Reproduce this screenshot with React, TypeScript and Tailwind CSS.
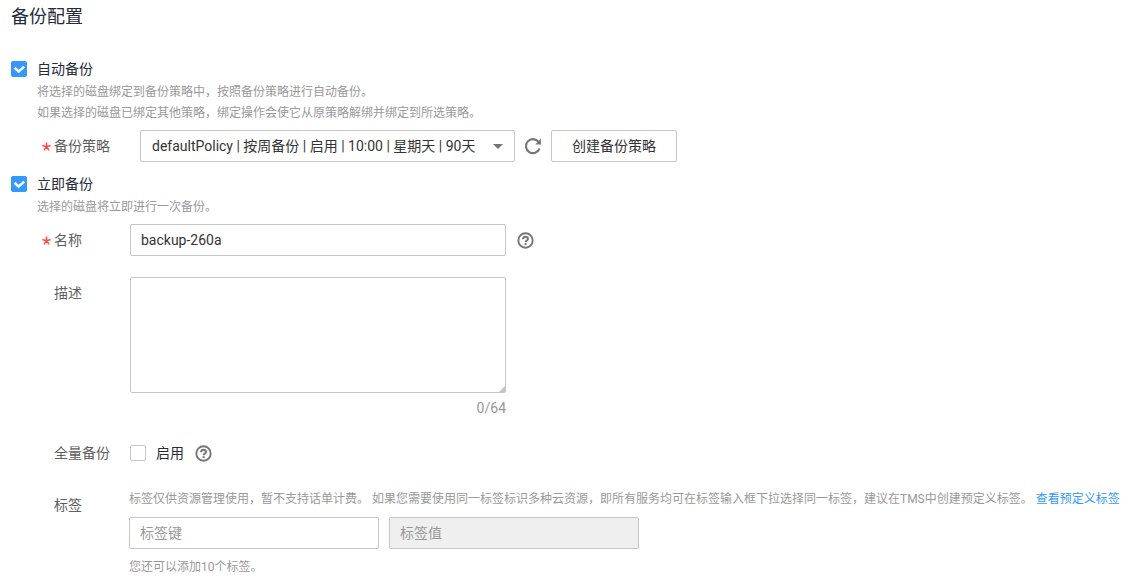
import { useState, type ReactNode } from "react";

function Check({ id, label, checked, onChange }: { id: string; label: string; checked: boolean; onChange: (v: boolean) => void }) {
  return (
    <div className="flex h-5 items-center gap-2.5">
      <span className="grid size-4 place-items-center">
        <input
          id={id}
          type="checkbox"
          checked={checked}
          onChange={(e) => onChange(e.target.checked)}
          className="col-start-1 row-start-1 size-4 appearance-none rounded-[2px] border border-[#c6c6c6] bg-white checked:border-[#3399ff] checked:bg-[#3399ff]"
        />
        {checked && (
          <svg viewBox="0 0 16 16" className="pointer-events-none col-start-1 row-start-1 size-4" fill="none" stroke="#fff" strokeWidth="2.6" aria-hidden="true">
            <path d="M3.6 6.8 7.6 10.6 13.2 5.6" />
          </svg>
        )}
      </span>
      <label htmlFor={id} className="text-sm leading-5 text-[#252b3a]">
        {label}
      </label>
    </div>
  );
}

function Star() {
  return (
    <svg viewBox="0 0 9 9" className="size-[9px]" fill="none" stroke="#ff4c4c" strokeWidth="1.5" aria-hidden="true">
      <path d="M4.5 4.8V.4M4.5 4.8.4 3.5M4.5 4.8 8.6 3.5M4.5 4.8 1.9 8.4M4.5 4.8 7.1 8.4" />
    </svg>
  );
}

function Row({ id, label, required, width = "w-[76px]", children }: { id: string; label: string; required?: boolean; width?: string; children: ReactNode }) {
  return (
    <div className="flex items-start pl-[31px]">
      <span className="flex h-8 w-3 shrink-0 items-center">{required && <Star />}</span>
      <label htmlFor={id} className={`shrink-0 text-sm leading-8 text-[#5e5e5e] ${width}`}>
        {label}
      </label>
      {children}
    </div>
  );
}

function Help() {
  return (
    <button type="button" aria-label="帮助" className="shrink-0">
      <svg viewBox="0 0 17 17" className="size-[17px]" fill="none" stroke="#757575" aria-hidden="true">
        <circle cx="8.5" cy="8.5" r="7.2" strokeWidth="1.9" />
        <path d="M6.1 7.2c0-1.6 1-2.5 2.4-2.5s2.4.9 2.4 2.2c0 1.7-2.3 1.8-2.3 3.4" strokeWidth="2" />
        <path d="M8.6 11.2v1.9" strokeWidth="2" />
      </svg>
    </button>
  );
}

const field = "h-8 rounded-[2px] border border-[#c6c6c6] px-2.5 text-sm text-[#333] outline-none placeholder:text-[#999]";
const hint = "text-xs leading-[21px] text-[#999]";

export default function App() {
  const [auto, setAuto] = useState(true);
  const [now, setNow] = useState(true);
  const [full, setFull] = useState(false);
  const [desc, setDesc] = useState("");

  return (
    <main className="bg-white px-[11px] pt-[5px] font-[Roboto,'Noto_Sans_CJK_SC',sans-serif]">
      <h1 className="mb-[30px] text-lg leading-6 text-[#252b3a]">备份配置</h1>

      <section>
        <Check id="auto" label="自动备份" checked={auto} onChange={setAuto} />
        <div className={`mt-[3px] mb-1.5 pl-[26px] ${hint}`}>
          <p>将选择的磁盘绑定到备份策略中，按照备份策略进行自动备份。</p>
          <p>如果选择的磁盘已绑定其他策略，绑定操作会使它从原策略解绑并绑定到所选策略。</p>
        </div>
        <Row id="policy" label="备份策略" required width="w-[86px]">
          <div className="grid w-[375px] items-center">
            <select id="policy" className="col-start-1 row-start-1 h-8 w-full appearance-none rounded-[2px] border border-[#c6c6c6] bg-white pr-8 pl-[11px] text-sm text-[#333] outline-none">
              <option>defaultPolicy | 按周备份 | 启用 | 10:00 | 星期天 | 90天</option>
            </select>
            <svg viewBox="0 0 10 5" className="pointer-events-none col-start-1 row-start-1 mr-3 h-[5px] w-2.5 justify-self-end" fill="#757575" aria-hidden="true">
              <path d="M0 0h10L5 5z" />
            </svg>
          </div>
          <button type="button" aria-label="刷新" className="grid h-8 w-9 place-items-center">
            <svg viewBox="0 0 18 18" className="size-[18px]" aria-hidden="true">
              <path d="M14.6 5A7 7 0 1 0 15.5 11.6" fill="none" stroke="#757575" strokeWidth="2.1" />
              <path d="M16.9 1.6v5.8h-5.6z" fill="#757575" />
            </svg>
          </button>
          <button type="button" className="h-8 rounded-[2px] border border-[#c6c6c6] bg-white px-5 text-sm text-[#333]">
            创建备份策略
          </button>
        </Row>
      </section>

      <section className="mt-3">
        <Check id="now" label="立即备份" checked={now} onChange={setNow} />
        <p className={`mt-[3px] mb-1.5 pl-[26px] ${hint}`}>选择的磁盘将立即进行一次备份。</p>
        <Row id="name" label="名称" required>
          <div className="flex items-center gap-[11px]">
            <input id="name" type="text" defaultValue="backup-260a" className={`w-[376px] bg-white ${field}`} />
            <Help />
          </div>
        </Row>

        <div className="mt-[21px]">
          <Row id="desc" label="描述">
            <div className="w-[376px]">
              <div className="relative h-[116px]">
                <textarea
                  id="desc"
                  maxLength={64}
                  value={desc}
                  onChange={(e) => setDesc(e.target.value)}
                  className="block h-full w-full resize-none rounded-[2px] border border-[#c6c6c6] bg-white px-2.5 py-1.5 text-sm text-[#333] outline-none"
                />
                <svg viewBox="0 0 6 6" className="pointer-events-none absolute right-px bottom-px size-1.5" fill="#c6c6c6" aria-hidden="true">
                  <path d="M6 0v6H0z" />
                </svg>
              </div>
              <p className="mt-[5px] text-right text-sm leading-5 text-[#999]">{desc.length}/64</p>
            </div>
          </Row>
        </div>

        <div className="mt-[19px]">
          <Row id="full" label="全量备份">
            <div className="flex h-8 items-center gap-[11px]">
              <Check id="full" label="启用" checked={full} onChange={setFull} />
              <Help />
            </div>
          </Row>
        </div>

        <div className="mt-5">
          <Row id="tag-key" label="标签" width="w-[75px]">
            <div className="min-w-0">
              <p className={`whitespace-nowrap ${hint}`}>
                标签仅供资源管理使用，暂不支持话单计费。 如果您需要使用同一标签标识多种云资源，即所有服务均可在标签输入框下拉选择同一标签，建议在TMS中创建预定义标签。
                <a href="#tags" className="ml-[3px] text-[#3399ff]">查看预定义标签</a>
              </p>
              <div className="mt-[7px] mb-2 flex gap-2.5">
                <input id="tag-key" type="text" placeholder="标签键" className={`w-[250px] bg-white ${field}`} />
                <input type="text" aria-label="标签值" placeholder="标签值" disabled className={`w-[250px] bg-[#efefef] ${field}`} />
              </div>
              <p className={hint}>您还可以添加10个标签。</p>
            </div>
          </Row>
        </div>
      </section>
    </main>
  );
}
